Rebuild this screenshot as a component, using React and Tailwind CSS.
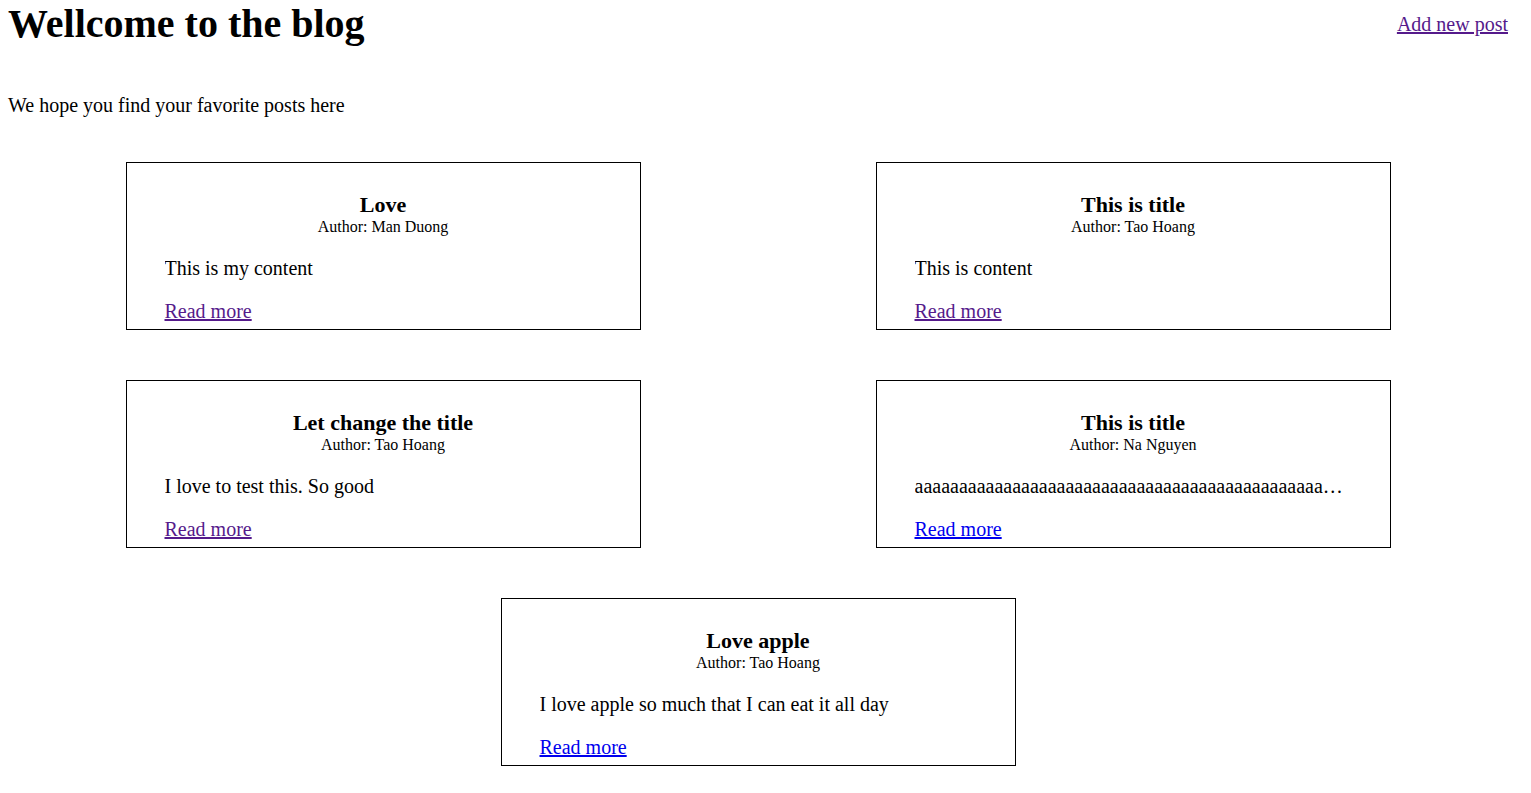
import React from "react";

const posts = [
  { title: "Love", author: "Man Duong", content: "This is my content", visited: true },
  { title: "This is title", author: "Tao Hoang", content: "This is content", visited: true },
  { title: "Let change the title", author: "Tao Hoang", content: "I love to test this. So good", visited: true },
  { title: "This is title", author: "Na Nguyen", content: "a".repeat(90), visited: false },
  { title: "Love apple", author: "Tao Hoang", content: "I love apple so much that I can eat it all day", visited: false },
];

const PostCard = ({ post }) => {
  return (
    <div className="w-[515px] border border-black px-[38px] pt-[29px] pb-[4px]">
      <h3 className="text-center text-[22px] font-bold leading-[25px]">{post.title}</h3>
      <p className="mt-px text-center text-[16px] leading-[18px]">Author: {post.author}</p>
      <p className="mt-[21px] text-[20px] leading-[23px] whitespace-nowrap overflow-hidden text-ellipsis">
        {post.content}
      </p>
      <a
        href="#"
        className={`mt-[20px] inline-block text-[20px] leading-[23px] underline ${
          post.visited ? "text-[#551a8b]" : "text-[#0000ee]"
        }`}
      >
        Read more
      </a>
    </div>
  );
};

export default function App() {
  return (
    <div className="min-h-screen bg-white text-black font-['Liberation_Serif','Times_New_Roman',serif]">
      {/* Header */}
      <div className="flex items-center justify-between pt-px pl-2 pr-[23px]">
        <h1 className="text-[40px] font-bold leading-[46px]">Wellcome to the blog</h1>
        <a href="#" className="text-[20px] leading-[23px] underline text-[#551a8b]">
          Add new post
        </a>
      </div>

      <p className="mt-[47px] ml-2 text-[20px] leading-[23px]">We hope you find your favorite posts here</p>

      {/* Posts */}
      <div className="ml-2 mt-[45px] w-[1500px] flex flex-wrap justify-center gap-y-[50px]">
        {posts.map((post, i) => (
          <div key={i} className="w-[750px] flex justify-center">
            <PostCard post={post} />
          </div>
        ))}
      </div>
    </div>
  );
}
